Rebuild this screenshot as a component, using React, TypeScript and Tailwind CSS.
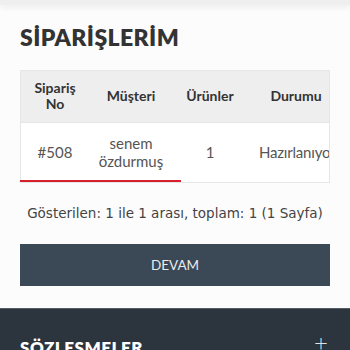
export default function App() {
  const font = { fontFamily: "Lato, 'Open Sans', sans-serif" };
  return (
    <div className="w-[350px] h-[350px] overflow-hidden bg-[#fcfcfc]" style={font}>
      {/* top header edge */}
      <div className="h-[5px] bg-[#efefef] shadow-[0_2px_6px_rgba(0,0,0,0.08)]" />

      <div className="px-5">
        <h1 className="mt-[18px] text-[23px] leading-[28px] font-extrabold text-[#333] tracking-[0.4px]">
          SİPARİŞLERİM
        </h1>

        {/* orders table */}
        <div className="mt-[19px] border border-[#e6e6e6] overflow-hidden">
          <table className="w-[338px] border-collapse text-center">
            <thead>
              <tr className="bg-[#eeeeee] text-[#333] text-[14px] leading-[16px]">
                <th className="w-[68px] h-[51px] px-2 font-bold">
                  Sipariş
                  <br />
                  No
                </th>
                <th className="w-[84px] px-2 font-bold">Müşteri</th>
                <th className="w-[74px] px-2 font-bold">Ürünler</th>
                <th className="px-2 font-bold pr-[22px]">Durumu</th>
              </tr>
            </thead>
            <tbody>
              <tr className="bg-white text-[#555] text-[15px] leading-[18px] border-t border-[#e6e6e6]">
                <td className="h-[60px] px-2">#508</td>
                <td className="px-2">
                  senem
                  <br />
                  özdurmuş
                </td>
                <td className="px-2">1</td>
                <td className="pl-3 text-left whitespace-nowrap tracking-[-0.2px]">Hazırlanıyor</td>
              </tr>
            </tbody>
          </table>
        </div>
        <div className="-mt-[3px] h-[2px] w-[161px] bg-[#d6202b] relative" />

        <p
          className="mt-[22px] text-center text-[13.5px] leading-[18px] text-[#444]"
          style={{ fontFamily: "'DejaVu Sans', Verdana, sans-serif" }}
        >
          Gösterilen: 1 ile 1 arası, toplam: 1 (1 Sayfa)
        </p>

        <button className="mt-[22px] w-full h-[42px] bg-[#3b4855] text-[#e9ecef] text-[13.5px]">
          DEVAM
        </button>
      </div>

      {/* footer */}
      <div className="mt-[22px] bg-[#2c343e] border-t border-[#555c64] h-[60px] pl-5 pr-[22px] pt-[28px] flex items-start justify-between">
        <h2 className="text-white text-[17px] leading-[22px] font-extrabold tracking-[0.5px]">SÖZLEŞMELER</h2>
        <span className="text-[#dfe2e6] text-[24px] leading-[20px] font-light -mt-[5px]">+</span>
      </div>
    </div>
  );
}
